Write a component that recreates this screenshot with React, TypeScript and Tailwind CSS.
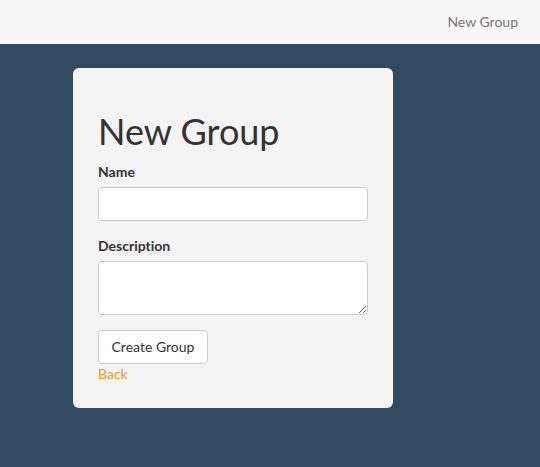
export default function App() {
  return (
    <div className="min-h-[467px] bg-[#324a5f] font-['Lato','Helvetica_Neue',Arial,sans-serif] text-[14px] text-[#333] [font-variant-ligatures:no-common-ligatures]">
      <nav className="flex h-[44px] items-center justify-end bg-[#f8f8f8] pr-[22px]">
        <a className="text-[14px] leading-5 text-[#777]">New Group</a>
      </nav>
      <div className="pl-[73px] pt-[24px]">
        <div className="w-[320px] rounded-[6px] bg-[#f4f4f4] px-[25px] pb-[24px] pt-[44px]">
          <h1 className="mb-[10px] text-[36px] font-normal leading-[1.1] text-[#333]">New Group</h1>
          <form className="flex flex-col">
            <div className="mb-[15px]">
              <label className="mb-[5px] block text-[14px] font-bold leading-5">Name</label>
              <input type="text" className="block h-[34px] w-full rounded-[4px] border border-[#ccc] bg-white px-3" />
            </div>
            <div className="mb-[15px]">
              <label className="mb-[5px] block text-[14px] font-bold leading-5">Description</label>
              <textarea className="block h-[54px] w-full rounded-[4px] border border-[#ccc] bg-white px-3 py-1.5" />
            </div>
            <div>
              <button type="button" className="h-[34px] w-[110px] rounded-[4px] border border-[#ccc] bg-white text-[14px] leading-5 text-[#333]">
                Create Group
              </button>
            </div>
            <a className="block leading-5 text-[#f7962f]">Back</a>
          </form>
        </div>
      </div>
    </div>
  );
}
